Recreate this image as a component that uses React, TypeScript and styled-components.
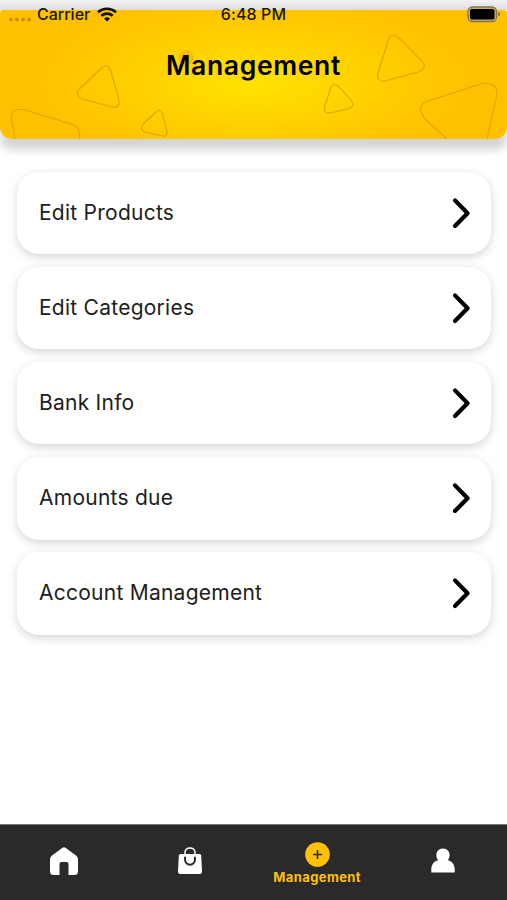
import React from "react";
import styled, { createGlobalStyle } from "styled-components";

const GlobalStyle = createGlobalStyle`
  * { box-sizing: border-box; }
  body { margin: 0; background: #fff; font-family: Inter, "Liberation Sans", sans-serif; color: #000; }
`;

const Screen = styled.div`
  width: 507px;
  height: 900px;
  display: flex;
  flex-direction: column;
  overflow: hidden;
  background: #fff;
`;

const Top = styled.div`
  position: relative;
  height: 139px;
  flex: none;
  padding-top: 10px;
  background: linear-gradient(#f3f3f3, #dedede 10px, transparent 10px);
`;

const Banner = styled.header`
  position: relative;
  height: 129px;
  display: flex;
  justify-content: center;
  border-radius: 3px 3px 12px 12px;
  background: radial-gradient(ellipse 230px 88px at 50% 56%, #ffe200 0%, #ffd800 30%, #ffcb00 65%, #ffc000 100%);
  box-shadow: 0 11px 9px rgba(0, 0, 0, 0.17);
`;

const Pattern = styled.svg`
  position: absolute;
  inset: 0;
`;

const Title = styled.h1`
  position: relative;
  margin: 39px 0 0;
  font-size: 26.5px;
  line-height: 32px;
  font-weight: 600;
  letter-spacing: 0.65px;
`;

const StatusBar = styled.div`
  position: absolute;
  inset: 4px 0 auto;
  height: 20px;
  display: grid;
  grid-template-columns: 1fr auto 1fr;
  align-items: center;
  padding: 0 8px;
  font-size: 16px;
  line-height: 20px;
  font-weight: 500;
  color: #1c1704;
`;

const Carrier = styled.div`
  display: flex;
  align-items: center;
`;

const Time = styled.span`
  letter-spacing: 0.1px;
`;

const Dots = styled.svg`
  margin: 10px 5px 0 0;
`;

const Wifi = styled.svg`
  margin-left: 7px;
`;

const Battery = styled.svg`
  justify-self: end;
  margin-right: -2px;
`;

const Menu = styled.main`
  flex: 1;
  display: flex;
  flex-direction: column;
  gap: 12.7px;
  padding: 32.5px 16.5px 0 17px;
`;

const Card = styled.button`
  height: 82.5px;
  flex: none;
  display: flex;
  align-items: center;
  justify-content: space-between;
  padding: 0 20px 0.5px 22px;
  border: 0;
  border-radius: 22px;
  background: #fff;
  box-shadow: 0 3px 10px rgba(0, 0, 0, 0.17);
  font: 400 21px/28px Inter, sans-serif;
  letter-spacing: 0.25px;
  color: #202020;
`;

const TabBar = styled.nav`
  height: 76px;
  flex: none;
  display: grid;
  grid-template-columns: repeat(4, 126.3px);
  justify-content: center;
  border-top: 1px solid #777;
  background: #2a2a2a;
`;

const Tab = styled.div<{ $active?: boolean }>`
  display: flex;
  flex-direction: column;
  align-items: center;
  padding: ${(p) => (p.$active ? "17px 0 0 1px" : "21px 0 0")};
  color: ${(p) => (p.$active ? "#ffc107" : "#fff")};
`;

const TabLabel = styled.span`
  margin-top: 2px;
  font-size: 13px;
  line-height: 16px;
  font-weight: 700;
  letter-spacing: 0.4px;
`;

const items = ["Edit Products", "Edit Categories", "Bank Info", "Amounts due", "Account Management"];

const Chevron = () => (
  <svg width="20" height="34" viewBox="0 0 20 34" fill="none" stroke="#000" strokeWidth="4.2" strokeLinecap="round" strokeLinejoin="round">
    <path d="M4 4.400 16.600 17.200 4 30" />
  </svg>
);

export default function App() {
  return (
    <>
      <GlobalStyle />
      <Screen>
        <Top>
          <Banner>
            <Pattern width="507" height="129" viewBox="0 10 507 129" fill="none" stroke="#d9a600" strokeWidth="1.1">
              <path d="M102 67.5 79.5 89Q74.500 95 81 98.500L112 107Q120 108 119 100L110.500 70Q108 63 102 67.500Z" />
              <path d="M156 112 143 124Q139 129 145 132L162 136Q168 137 167 131L162.500 114Q160 108 156 112Z" />
              <path d="M15 139 11.500 119Q10 108 23 109.500L71 124Q80 127 79.500 134V139" />
              <path d="M389 38 378 73Q376 82 385 81L418 72Q428 68 422 61L399 38Q392 32 389 38Z" />
              <path d="M331 87 324.500 107Q323 114 330 113L349 108.500Q356 106 351 100L338 86Q333 83 331 87Z" />
              <path d="M447 139 425 119Q415 105 428 101L481 84Q497 81 497 94L487 139" />
              <circle cx="186" cy="57.500" r="7.500" fill="#ffb900" stroke="none" />
            </Pattern>
            <Title>Management</Title>
          </Banner>
          <StatusBar>
            <Carrier>
              <Dots width="24" height="5" viewBox="0 0 24 5" fill="#c6930d">
                <circle cx="3" cy="2.500" r="1.900" /><circle cx="9" cy="2.500" r="1.900" /><circle cx="15" cy="2.500" r="1.900" /><circle cx="21" cy="2.500" r="1.900" />
              </Dots>
              Carrier
              <Wifi width="20" height="15" viewBox="0 0 20 15" fill="none" stroke="#111" strokeWidth="2.600">
                <path d="M1 5.200C6.200.6 13.800.6 19 5.200M4.300 8.800C7.600 5.900 12.400 5.900 15.700 8.800" />
                <path d="M7 11.400Q10 9 13 11.400L10 14.500Z" fill="#111" stroke="none" />
              </Wifi>
            </Carrier>
            <Time>6:48 PM</Time>
            <Battery width="34" height="17" viewBox="0 0 34 17">
              <rect x="1" y="1" width="28.500" height="14.500" rx="4.500" fill="#c7ad67" stroke="#85754b" strokeWidth="1.300" />
              <rect x="3" y="3" width="24.500" height="10.500" rx="1.800" fill="#000" />
              <path d="M31 6Q33 6.500 33 8.300T31 10.500Z" fill="#8c7433" />
            </Battery>
          </StatusBar>
        </Top>
        <Menu>
          {items.map((item) => (
            <Card key={item}>{item}<Chevron /></Card>
          ))}
        </Menu>
        <TabBar>
          <Tab>
            <svg width="28" height="30" viewBox="0 0 28 30" fill="currentColor">
              <path d="M12.500 1.800Q14 .6 15.500 1.800L26 9.500Q28 11 28 13V25.500Q28 29 24.500 29H18.500V18Q18.500 16 16.500 16H11.500Q9.500 16 9.500 18V29H3.500Q0 29 0 25.500V13Q0 11 2 9.500Z" />
            </svg>
          </Tab>
          <Tab>
            <svg width="26" height="30" viewBox="0 0 26 30" fill="none">
              <path d="M3.500 8H22.500Q24 8 24.200 9.500L25 25.500Q25 28 22.500 28H3.500Q1 28 1 25.500L1.800 9.500Q2 8 3.500 8Z" fill="currentColor" />
              <path d="M8 9V6.500C8 .4 18 .4 18 6.500V9" stroke="currentColor" strokeWidth="1.500" />
              <path d="M8 11.500V13C8 20.500 18 20.500 18 13V11.500" stroke="#2a2a2a" strokeWidth="2" strokeLinecap="round" />
            </svg>
          </Tab>
          <Tab $active>
            <svg width="25" height="25" viewBox="0 0 25 25">
              <circle cx="12.500" cy="12.500" r="12.300" fill="currentColor" />
              <path d="M8 12.500H17M12.500 8V17" stroke="#2a2a2a" strokeWidth="1.600" />
            </svg>
            <TabLabel>Management</TabLabel>
          </Tab>
          <Tab>
            <svg width="24" height="30" viewBox="0 0 24 30" fill="currentColor">
              <path d="M.3 26.500V23C.5 18 3.500 15 7 14.200C3.200 9 6.200 2.600 12 2.600S20.800 9 17 14.200C20.500 15 23.500 18 23.700 23V26.500Z" />
            </svg>
          </Tab>
        </TabBar>
      </Screen>
    </>
  );
}
